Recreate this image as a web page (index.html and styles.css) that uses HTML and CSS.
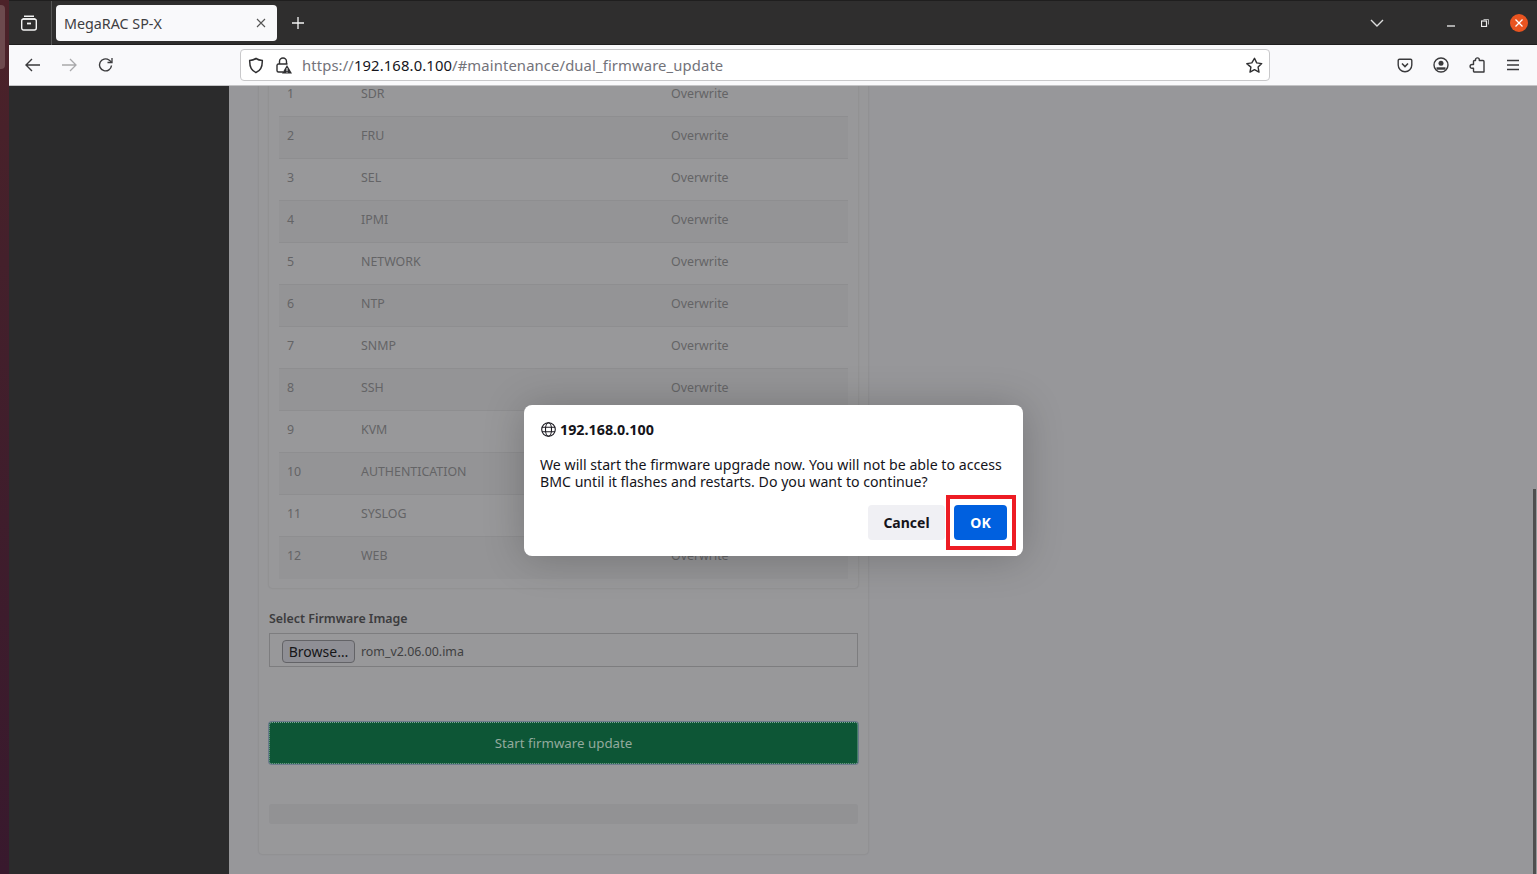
FILE: index.html
```html
<!DOCTYPE html>
<html lang="en">
<head>
<meta charset="utf-8">
<title>MegaRAC SP-X</title>
<link rel="stylesheet" href="styles.css">
</head>
<body>
<div class="desktop">
  <div class="wallpaper"><div class="dock-item"></div></div>
  <div class="window">
    <header class="tabbar">
      <div class="tabs-view">
        <svg width="18" height="18" viewBox="0 0 18 18" fill="none" stroke="#f4f4f4" stroke-width="1.4"><path d="M4 2.2h10M2.8 5h12.4"/><rect x="1.7" y="5" width="14.6" height="11" rx="2"/><path d="M7 9.5h4" stroke-width="1.8"/></svg>
      </div>
      <div class="tab">
        <span class="tab-title">MegaRAC SP-X</span>
        <svg width="10" height="10" viewBox="0 0 10 10" stroke="#555" stroke-width="1.1"><path d="M1 1l8 8M9 1l-8 8"/></svg>
      </div>
      <svg class="newtab" width="12" height="12" viewBox="0 0 12 12" stroke="#f4f4f4" stroke-width="1.3"><path d="M6 0v12M0 6h12"/></svg>
      <div class="tabbar-right">
        <svg class="chev" width="14" height="8" viewBox="0 0 14 8" fill="none" stroke="#ddd" stroke-width="1.4"><path d="M1 1l6 6 6-6"/></svg>
        <svg class="win-min" width="8" height="2" viewBox="0 0 8 2"><path d="M0 1h8" stroke="#eee" stroke-width="1.3"/></svg>
        <svg class="win-max" width="8" height="8" viewBox="0 0 8 8" fill="none" stroke="#eee"><rect x="0.5" y="2" width="5" height="5.5" stroke-width="1.2"/><path d="M2.5 .5h5v5" stroke-width=".7"/></svg>
        <div class="win-close"><svg width="8" height="8" viewBox="0 0 8 8" stroke="#fff" stroke-width="1.3"><path d="M.5.5l7 7M7.500.5l-7 7"/></svg></div>
      </div>
    </header>
    <nav class="toolbar">
      <svg class="tool back" width="16" height="14" viewBox="0 0 16 14" fill="none" stroke="#3a3a3c" stroke-width="1.4"><path d="M15 7H1.500M7 1L1 7l6 6"/></svg>
      <svg class="tool fwd" width="16" height="14" viewBox="0 0 16 14" fill="none" stroke="#a9a9ab" stroke-width="1.3"><path d="M1 7h13.500M9 1l6 6-6 6"/></svg>
      <svg class="tool reload" width="16" height="16" viewBox="0 0 16 16" fill="none" stroke="#3a3a3c" stroke-width="1.4"><path d="M13.500 8.500A6 6 0 1 1 11 3l2.500 2"/><path d="M14 1v4.500H9.500" stroke-width="1.300"/></svg>
      <div class="urlbar">
        <svg width="16" height="17" viewBox="0 0 16 17" fill="none" stroke="#2f2f31" stroke-width="1.5"><path d="M8 1.500c2 1.300 4 1.800 6.300 1.900.2 6-1.600 10.400-6.300 12.100C3.300 13.800 1.500 9.400 1.700 3.400 4 3.300 6 2.800 8 1.500z"/></svg>
        <svg class="lock" width="17" height="17" viewBox="0 0 17 17" fill="none"><path d="M4.500 7V4.500a3.500 3.500 0 0 1 7 0V7" stroke="#2f2f31" stroke-width="1.4"/><path d="M8 15H3.500A1.500 1.500 0 0 1 2 13.500V8.300A1.500 1.500 0 0 1 3.500 7h9" stroke="#2f2f31" stroke-width="1.4"/><path d="M12 8l5 8.500H7z" fill="#2f2f31"/><path d="M12 11v3M12 14.800v.9" stroke="#fff"/></svg>
        <div class="url"><span class="url-dim">https://</span><span class="url-host">192.168.0.100</span><span class="url-dim">/#maintenance/dual_firmware_update</span></div>
        <svg width="17" height="17" viewBox="0 0 17 17" fill="none" stroke="#2f2f31" stroke-width="1.4" stroke-linejoin="round"><path d="M8.500 1.300l2.200 4.600 5 .7-3.600 3.500.9 5-4.500-2.400-4.500 2.400.9-5L.8 6.600l5-.7z"/></svg>
      </div>
      <div class="tool-right">
        <svg width="16" height="15" viewBox="0 0 16 15" fill="none" stroke="#3a3a3c" stroke-width="1.4"><path d="M2.500 1.200h11A1.300 1.300 0 0 1 14.800 2.500V7a6.800 6.800 0 0 1-13.600 0V2.500a1.300 1.300 0 0 1 1.300-1.300z"/><path d="M5 5.500l3 3 3-3" stroke-width="1.600"/></svg>
        <svg width="16" height="16" viewBox="0 0 16 16" fill="none" stroke="#3a3a3c" stroke-width="1.4"><circle cx="8" cy="8" r="7"/><circle cx="8" cy="6.200" r="2.500" fill="#3a3a3c" stroke="none"/><path d="M3.500 11.500h9" stroke-width="2.400"/></svg>
        <svg width="16" height="16" viewBox="0 0 16 16" fill="none" stroke="#3a3a3c" stroke-width="1.4" stroke-linejoin="round"><path d="M6.500 3.500V2.800a1.900 1.900 0 0 1 3.800 0v.7h3.700a1 1 0 0 1 1 1V15H5.500a1 1 0 0 1-1-1v-2.700H3a1.900 1.900 0 0 1 0-3.800h1.500V4.500a1 1 0 0 1 1-1z"/></svg>
        <svg width="14" height="12" viewBox="0 0 14 12" stroke="#3a3a3c" stroke-width="1.300"><path d="M1 1.500h12M1 6h12M1 10.500h12"/></svg>
      </div>
    </nav>
    <div class="content">
      <aside class="sidebar"></aside>
      <main class="main">
        <section class="card">
          <div class="panel">
            <table class="config">
              <tbody>
                <tr><td>1</td><td>SDR</td><td>Overwrite</td></tr>
                <tr><td>2</td><td>FRU</td><td>Overwrite</td></tr>
                <tr><td>3</td><td>SEL</td><td>Overwrite</td></tr>
                <tr><td>4</td><td>IPMI</td><td>Overwrite</td></tr>
                <tr><td>5</td><td>NETWORK</td><td>Overwrite</td></tr>
                <tr><td>6</td><td>NTP</td><td>Overwrite</td></tr>
                <tr><td>7</td><td>SNMP</td><td>Overwrite</td></tr>
                <tr><td>8</td><td>SSH</td><td>Overwrite</td></tr>
                <tr><td>9</td><td>KVM</td><td>Overwrite</td></tr>
                <tr><td>10</td><td>AUTHENTICATION</td><td>Overwrite</td></tr>
                <tr><td>11</td><td>SYSLOG</td><td>Overwrite</td></tr>
                <tr><td>12</td><td>WEB</td><td>Overwrite</td></tr>
              </tbody>
            </table>
          </div>
          <div class="field-label">Select Firmware Image</div>
          <div class="file-input"><span class="browse">Browse…</span><span class="file-name">rom_v2.06.00.ima</span></div>
          <div class="start-btn">Start firmware update</div>
          <div class="progress"></div>
        </section>
      </main>
      <div class="scrollbar"></div>
      <div class="dialog">
        <div class="dialog-title">
          <svg width="15" height="15" viewBox="0 0 15 15" fill="none" stroke="#1c1b22" stroke-width="1.100"><circle cx="7.500" cy="7.500" r="6.800"/><ellipse cx="7.500" cy="7.500" rx="3" ry="6.800"/><path d="M1 5.300h13M1 9.700h13"/></svg>
          <span>192.168.0.100</span>
        </div>
        <p class="dialog-text">We will start the firmware upgrade now. You will not be able to access BMC until it flashes and restarts. Do you want to continue?</p>
        <div class="dialog-actions">
          <div class="btn btn-cancel">Cancel</div>
          <div class="ok-frame"><div class="btn btn-ok">OK</div></div>
        </div>
      </div>
    </div>
  </div>
</div>
</body>
</html>
```

FILE: styles.css
```css
* { box-sizing: border-box; }
html, body { margin: 0; height: 100%; overflow: hidden; }
body { font-family: "Open Sans", "Noto Sans", sans-serif; background: #2b2b2b; }
.desktop { display: flex; width: 1537px; height: 874px; }
.wallpaper { width: 9px; flex: none; background: linear-gradient(180deg, #4c2229 0%, #44202b 30%, #38192d 100%); padding-top: 5px; }
.dock-item { width: 5px; height: 64px; background: #6d4a4e; border-radius: 0 4px 4px 0; }
.window { flex: 1; display: flex; flex-direction: column; min-width: 0; }

.tabbar { height: 45px; flex: none; display: flex; align-items: center; background: #2f2e2e; border-top: 1px solid #1f1e1e; border-bottom: 1px solid #1f1e1e; }
.tabs-view { width: 43px; height: 44px; display: flex; align-items: center; justify-content: center; padding-right: 3px; border-right: 1px solid #555; flex: none; }
.tab { width: 221px; height: 36px; margin-left: 4px; background: #f9f9fb; border-radius: 4px; display: flex; align-items: center; justify-content: space-between; padding: 0 11px 0 8px; flex: none; }
.tab-title { font-size: 14.3px; padding-top: 1px; color: #3e3e42; font-family: "Noto Sans", sans-serif; }
.newtab { margin-left: 15px; flex: none; }
.tabbar-right { margin-left: auto; display: flex; align-items: center; }
.chev { margin-right: 63px; }
.win-min { margin-right: 26px; margin-top: 7px; }
.win-max { margin-right: 21px; }
.win-close { width: 18px; height: 18px; margin-right: 9px; border-radius: 50%; background: #e95420; display: flex; align-items: center; justify-content: center; }

.toolbar { height: 41px; flex: none; display: flex; align-items: center; background: #f9f9fb; border-bottom: 1px solid #c4c4c6; padding-left: 16px; }
.tool { flex: none; }
.fwd { margin-left: 20px; }
.reload { margin-left: 21px; }
.urlbar { width: 1030px; height: 32px; margin-left: 126px; background: #fff; border: 1px solid #c8c8ca; border-radius: 4px; display: flex; align-items: center; padding: 0 6px 0 7px; flex: none; }
.lock { margin-left: 11px; }
.url { flex: 1; margin-left: 10px; font-size: 14.8px; font-family: "Noto Sans", sans-serif; letter-spacing: .12px; white-space: nowrap; }
.url-dim { color: #73737a; }
.url-host { color: #16151c; }
.tool-right { display: flex; align-items: center; gap: 20px; margin-left: 127px; }
.tool-right svg:last-child { margin-left: 1px; }

.content { flex: 1; display: flex; position: relative; overflow: hidden; background: #97979a; min-height: 0; }
.sidebar { width: 220px; flex: none; background: #2b2b2c; }
.main { flex: 1; padding-left: 30px; min-width: 0; }
.card { width: 609px; margin-top: -34px; padding: 10px 10px 30px; background: #98989a; box-shadow: 0 0 2px rgba(0,0,0,.16); border-radius: 3px; font-family: "Noto Sans", sans-serif; }
.panel { padding: 12px 10px 9px; box-shadow: 0 0 2px rgba(0,0,0,.16); border-radius: 3px; }
.config { width: 569px; border-collapse: collapse; table-layout: fixed; font-size: 12.4px; color: #646466; }
.config td { height: 42px; padding: 0 8px 4px; border-top: 1px solid #8e8e90; }
.config tr:nth-child(even) td { background: #949496; }
.config td:nth-child(1) { width: 74px; }
.config td:nth-child(2) { width: 310px; }

.field-label { margin-top: 21px; height: 20px; line-height: 20px; font-size: 12.4px; font-weight: 600; color: #3c3c3e; }
.file-input { margin-top: 4px; height: 34px; border: 1px solid #7d7d7f; display: flex; align-items: center; padding: 3px 0 0 12px; font-size: 12.4px; color: #3f3f41; }
.browse { width: 73px; height: 23px; display: flex; align-items: center; justify-content: center; background: #8f8f95; border: 1px solid #636367; border-radius: 4px; font-size: 14px; color: #161618; }
.file-name { margin-left: 6px; padding-top: 1px; }
.start-btn { margin-top: 55px; height: 42px; display: flex; align-items: center; justify-content: center; background: #0d5636; border: 1px dotted #7fa593; border-radius: 3px; box-shadow: 0 0 0 1px #6b7a8c; font-size: 13.3px; color: #93aa9d; }
.progress { margin-top: 40px; height: 20px; background: #929294; border-radius: 3px; }

.scrollbar { position: absolute; right: 1px; top: 403px; bottom: 0; width: 3px; background: #4f4f4f; }
.dialog { position: absolute; left: 515px; top: 319px; width: 499px; height: 151px; background: #fff; border-radius: 8px; box-shadow: 0 2px 40px rgba(0,0,0,.22); padding: 15px 15px 0 16px; font-family: "Noto Sans", sans-serif; color: #15141a; }
.dialog-title { display: flex; align-items: center; gap: 4px; height: 18px; font-size: 14.3px; font-weight: 700; padding-left: 1px; }
.dialog-text { margin: 18px 0 0; font-size: 14.15px; line-height: 17px; width: 470px; }
.dialog-actions { position: absolute; right: 7px; bottom: 6px; display: flex; align-items: center; }
.btn { display: flex; align-items: center; justify-content: center; height: 35px; border-radius: 4px; font-size: 14px; font-weight: 700; }
.btn-cancel { width: 77px; background: #f0f0f4; margin-right: 1px; color: #15141a; }
.ok-frame { width: 70px; height: 55px; border: 4px solid #ed1c24; padding: 6px 4px; }
.btn-ok { width: 53px; height: 35px; background: #0060df; color: #fff; }
```
